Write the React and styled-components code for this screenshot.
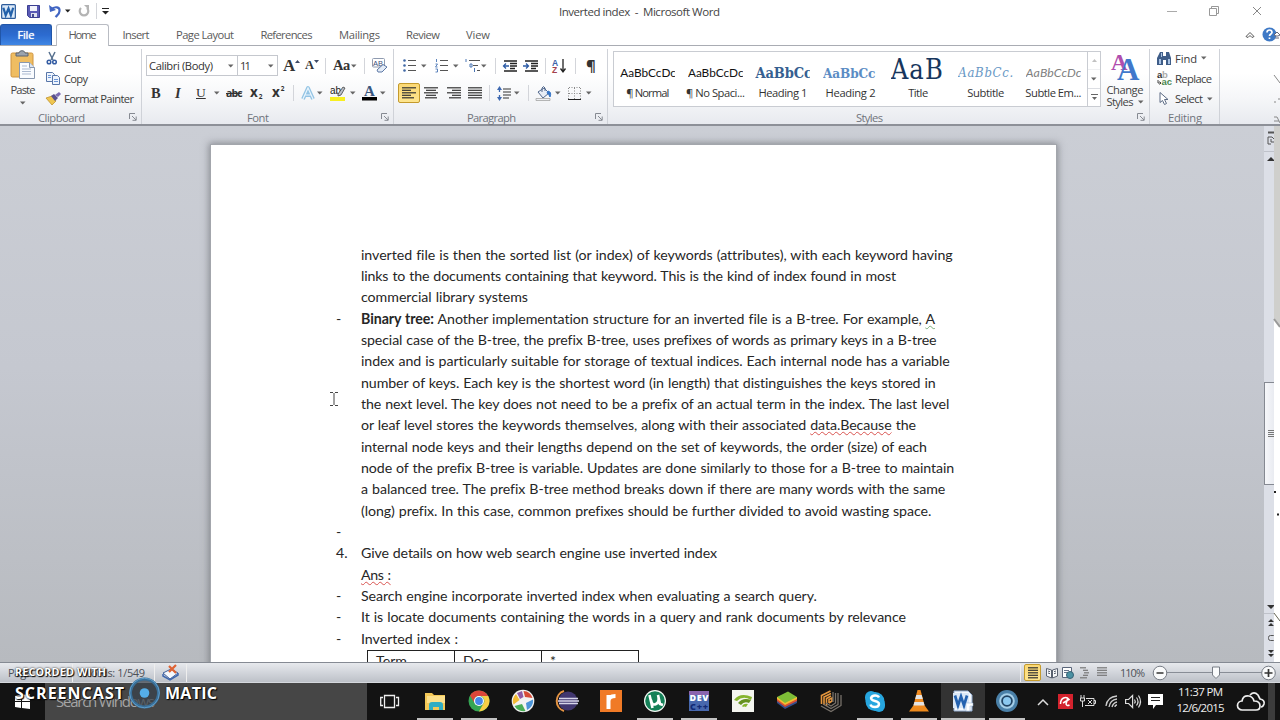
import React, { useLayoutEffect, useRef } from "react";
import styled, { createGlobalStyle } from "styled-components";

const Global = createGlobalStyle`
  * { box-sizing: border-box; }
  body { margin: 0; background: #fff; overflow: hidden; }
  svg { display: block; flex: none; overflow: visible; }
`;
const UI = '"Open Sans", "Noto Sans", sans-serif';

const Screen = styled.div`
  position: relative; width: 1280px; height: 720px; overflow: hidden;
  display: flex; flex-direction: column; background: #fff;
  font: 11.2px ${UI}; color: #3c3c3c;
`;

const FitBox = styled.span`
  display: inline-block; white-space: pre; width: ${p => p.$w}px; flex: none;
`;
/* Spreads a label evenly over the given width. */
function Fit({ w, children }) {
  const inner = useRef(null);
  useLayoutEffect(() => {
    const el = inner.current;
    el.style.letterSpacing = "0px";
    const n = el.textContent.length;
    const natural = el.getBoundingClientRect().width;
    el.style.letterSpacing = `${(w - natural) / Math.max(1, n - 1)}px`;
  });
  return <FitBox $w={w}><span ref={inner}>{children}</span></FitBox>;
}

/* ---------- title bar and tabs ---------- */
const TitleBar = styled.div`
  height: 24px; display: flex; align-items: center; flex: none; padding: 0 0 2px 1px;
`;
const Slot = styled.span`
  width: ${p => p.$w}px; height: ${p => p.$h || 20}px; flex: none;
  display: flex; align-items: center; white-space: nowrap;
`;
const Title = styled.div`
  width: 608px; display: flex; font-size: 11.5px; color: #444; padding-top: 1px;
`;
const Tabs = styled.div`
  height: 22px; flex: none; display: flex; align-items: flex-end;
  border-bottom: 1px solid #a9acb3; color: #5a5a5a;
`;
const FileTab = styled.div`
  width: 52px; height: 21px; margin-right: 4px; color: #fff; border-radius: 3px 3px 0 0;
  background: linear-gradient(#2a62bd, #2c6bd0 50%, #3f86e4); border: 1px solid #2156a8; border-bottom: 0;
  display: flex; justify-content: center; align-items: center; text-shadow: 0 0 1px #fff; padding-bottom: 2px;
`;
const Tab = styled.div`
  width: ${p => p.$w}px; height: 22px; margin-bottom: -1px;
  display: flex; justify-content: center; align-items: center; padding-bottom: 3px;
  border: 1px solid ${p => (p.$active ? "#b9bcc3" : "transparent")}; border-bottom: 0;
  border-radius: 3px 3px 0 0; background: ${p => (p.$active ? "#fff" : "none")};
`;
const TabTools = styled.div`
  margin-left: auto; height: 21px; display: flex; align-items: center;
`;

/* ---------- ribbon ---------- */
const Ribbon = styled.div`
  height: 80px; flex: none; display: flex; padding-top: 3px; border-bottom: 2px solid #8d9098;
  background: linear-gradient(#fff 0, #fff 35%, #f6f7f9 65%, #e8eaef);
`;
const Group = styled.section`
  width: ${p => p.$w}px; flex: none; height: 75px; display: flex; flex-direction: column;
  border-right: 1px solid #cfd2d8;
`;
const GroupBody = styled.div`
  height: 61px; display: flex; flex-direction: ${p => (p.$col ? "column" : "row")};
  padding: ${p => p.$pad || "0"};
`;
const GroupFoot = styled.div`
  height: 14px; display: flex; align-items: center; color: #70747c;
  padding: 0 4px 0 ${p => p.$left}px; justify-content: space-between;
`;
const Row = styled.div`
  display: flex; align-items: center; flex: none; height: ${p => p.$h || 20}px; margin-bottom: ${p => p.$mb || 0}px;
`;
const Big = styled.div`
  width: ${p => p.$w}px; display: flex; flex-direction: column; align-items: center; flex: none;
  color: #444; line-height: 12px; padding-top: 1px;
`;
const BigText = styled.div`display: flex; align-items: center; gap: 4px; height: ${p => p.$h || 12}px;`;
const Column = styled.div`display: flex; flex-direction: column; margin-top: -1px;`;
const Combo = styled.div`
  width: ${p => p.$w}px; height: 21px; border: 1px solid #c5c8ce; margin-left: ${p => p.$ml || 0}px;
  display: flex; align-items: center; justify-content: space-between; padding: 0 3px 0 2px; color: #333;
  background: #fff; flex: none;
`;
const Rule = styled.i`width: 1px; height: 16px; background: #d3d5da; flex: none;`;
const Glyph = styled.span`
  font-family: ${p => p.$f || '"Liberation Serif", serif'}; font-size: ${p => p.$s || 14}px;
  font-weight: ${p => p.$b || 700}; font-style: ${p => p.$i || "normal"}; color: ${p => p.$c || "#333"};
  text-decoration: ${p => p.$d || "none"}; line-height: 1; letter-spacing: ${p => p.$ls || 0}px;
`;
const Script = styled(Glyph)`margin-top: ${p => p.$y}px; margin-left: 1px;`;
const Pressed = styled.span`
  width: 22px; height: 20px; flex: none; border: 1px solid #c49a2c; border-radius: 2px;
  background: linear-gradient(#fbd874, #fde58f); display: flex; align-items: center; justify-content: center;
`;

const Gallery = styled.div`
  display: flex; width: 488px; height: 56px; margin-top: 2px; border: 1px solid #c9ccd2; background: #fff; flex: none;
`;
const Style = styled.div`
  width: 67.6px; height: 54px; flex: none; display: flex; flex-direction: column; align-items: center; padding-top: 5px;
`;
const Sample = styled.div`
  width: 55px; height: 29px; overflow: hidden; white-space: nowrap; line-height: ${p => p.$lh || 32}px;
  font-family: ${p => p.$f}; font-size: ${p => p.$s}px; font-weight: ${p => p.$b || 400};
  font-style: ${p => p.$i || "normal"}; color: ${p => p.$c}; letter-spacing: ${p => p.$ls || 0}px;
`;
const StyleName = styled.div`height: 16px; line-height: 14px; color: #333;`;
const GalleryScroll = styled.div`
  width: 13px; margin-left: auto; display: flex; flex-direction: column; border-left: 1px solid #c9ccd2;
`;
const ScrollCell = styled.div`
  flex: 1; display: flex; align-items: center; justify-content: center;
  border-bottom: ${p => (p.$last ? 0 : 1)}px solid #dcdee3; opacity: ${p => (p.$dim ? 0.45 : 1)};
`;

/* ---------- document ---------- */
const Workspace = styled.div`
  height: 536px; flex: none; display: flex; overflow: hidden;
  background: linear-gradient(#cbced5, #c5c8d0 45%, #b7babf);
`;
const Page = styled.main`
  width: 845px; height: 560px; margin: 19px 208px 0 211px; flex: none; background: #fff; padding: 98.6px 0 0 125px;
  box-shadow: 0 0 0 1px #a3a6ac, 0 0 7px 2px rgba(70,72,78,.5);
  font-family: Lato, "Open Sans", sans-serif; font-size: 14.2px; color: #262626; word-spacing: .5px;
`;
const Line = styled.div`height: 21.33px; line-height: 22px; display: flex;`;
const Mark = styled.span`width: 25px; flex: none;`;
const Wavy = styled.span`
  text-decoration: underline wavy ${p => p.$c || "#d9534f"} 1px; text-underline-offset: 1px;
`;
const Table = styled.div`
  display: grid; grid-template-columns: 87px 87px 97px; width: 272px; height: 40px; margin: 1px 0 0 31px;
  border: 1px solid #222; border-right: 0; line-height: 20px;
`;
const Cell = styled.div`border-right: 1px solid #222; padding-left: 8px;`;
const ScrollBar = styled.div`
  width: 10px; flex: none; background: #dcdfe7; display: flex; flex-direction: column; overflow: hidden;
`;
const ScrollPart = styled.div`
  height: ${p => p.$h}px; flex: none; display: flex; flex-direction: column; align-items: center;
  justify-content: ${p => p.$j || "center"}; padding-left: 3px;
  border-bottom: ${p => (p.$line ? 1 : 0)}px solid #bfc2ca;
`;
const Thumb = styled.div`
  height: 103px; border: 1px solid #858992; border-right: 0; background: linear-gradient(90deg,#f6f7fa,#e9ebf1);
  display: flex; align-items: center; padding-left: 3px; flex: none;
`;
const Edge = styled.div`flex: 1; background: #fff;`;

/* ---------- status bar ---------- */
const Status = styled.div`
  height: 21px; flex: none; display: flex; align-items: center; padding-left: 8px; color: #4e5158; font-size: 11px;
  background: linear-gradient(#e7e9ed, #d4d7dd 45%, #bdc1c8); border-top: 1px solid #858a93; border-bottom: 1px solid #d5d8dd;
`;
const Divider = styled.i`width: 1px; height: 18px; background: #aaaeb6; border-right: 1px solid #eee; flex: none;`;
const ViewOn = styled(Pressed)`width: 17px; height: 17px;`;

/* ---------- taskbar ---------- */
const Taskbar = styled.div`
  height: 37px; flex: none; display: flex; background: #131313; color: #eee;
`;
const Start = styled.div`width: 45px; padding: 11px 0 0 15px; flex: none;`;
const Search = styled.div`
  width: 322px; background: #464646; color: #a5a5a5; font-size: 15px; line-height: 36px; padding-left: 11px; flex: none;
`;
const TaskItem = styled.div`
  width: ${p => (p.$first ? 46 : 44)}px; height: 37px; display: flex; flex-direction: column; align-items: center; padding-top: 6px;
  background: ${p => (p.$active ? "#333" : "none")}; flex: none;
`;
const Running = styled.i`
  width: ${p => (p.$wide ? 44 : 36)}px; height: 2px; margin-top: auto; flex: none;
  background: ${p => (p.$on ? "#c2c2c2" : "transparent")};
`;
const Tray = styled.div`display: flex; align-items: center; padding-left: 8px; flex: 1;`;
const Clock = styled.div`
  width: 73px; display: flex; flex-direction: column; align-items: center; font-size: 11.5px; line-height: 16px; padding-bottom: 3px;
`;
const Peek = styled.i`width: 7px; height: 37px; background: #3c3c3c; margin-left: 5px; flex: none;`;

/* ---------- floating layers ---------- */
const Watermark = styled.div`
  position: absolute; left: 15px; top: 663px; color: #fff; font-weight: 700;
  text-shadow: 1px 1px 1px #000, 0 0 2px #000;
`;
const MarkTop = styled.div`font-size: 10.8px; line-height: 17px; height: 13px;`;
const MarkRow = styled.div`display: flex; align-items: center; height: 34px; font-size: 16px; gap: 5px;`;
const Caret = styled.div`position: absolute; left: 330px; top: 392px;`;
const Stray = styled.div`position: absolute; left: 1274px; top: 75px;`;

/* ---------- drawings ---------- */
const Arr = ({ c = "#666" }) => <svg width="6" height="4"><path d="M0 .5h5.500L2.700 3.500z" fill={c} /></svg>;
const SizeMark = ({ up }) => <svg width="5" height="14"><path d={up ? "M0 4h5L2.500 1z" : "M0 1h5L2.500 4z"} fill="#3d4a66" /></svg>;
const Launcher = () => <svg width="8" height="8" fill="none" stroke="#868a92"><path d="M.5 6V.5H6M3 3l4 4M7.2 3.5v3.8H3.500" /></svg>;
const Lines = ({ rows, w = 14, c = "#333" }) => (
  <svg width={w} height="12" stroke={c}>{rows.map(([a, b], i) => <path key={i} d={`M${a} ${i * 2.5 + 0.8}H${b}`} strokeWidth="1.2" />)}</svg>
);
const WordLogo = () => (
  <svg width="15" height="15" viewBox="0 0 16 16"><rect x=".7" y=".7" width="14.6" height="14.6" rx="1" fill="#dbe9f8" stroke="#2c5b9b" strokeWidth="1.3" />
    <path d="M2.500 4l2.500 8 3-7 2.500 7L13 4" fill="none" stroke="#2361aa" strokeWidth="2.400" /></svg>
);
const Save = () => <svg width="13" height="13"><path d="M.5.5h12v12h-10l-2-2z" fill="#5a5ab5" stroke="#3b3f91" /><path d="M3 1h7v5H3z" fill="#f3f4fb" /><path d="M4 8h6v4H4z" fill="#dfe2ef" /><path d="M5 9h2v3H5z" fill="#444a90" /></svg>;
const Undo = () => <svg width="13" height="13" fill="none" stroke="#4165c2" strokeWidth="2.200"><path d="M2 4.500C6 .8 11 2 10.500 6c0 3-2 4-4 6" /><path d="M0 0l1 7 6-2z" fill="#4165c2" stroke="none" /></svg>;
const Redo = () => <svg width="12" height="13" fill="none" stroke="#b4b4b4" strokeWidth="2.200"><path d="M3 3a4.300 4.300 0 1 0 6 0" /><path d="M6 0h5v5z" fill="#b4b4b4" stroke="none" /></svg>;
const Paste = () => (
  <svg width="26" height="29"><rect x="1" y="3" width="22" height="24" rx="1.500" fill="#efbd62" stroke="#cf9440" /><path d="M6 5V3h3c0-3 6-3 6 0h3v3H6z" fill="#9ba3ad" stroke="#5d6570" />
    <path d="M9.500 12.500h10l5 5v11h-15z" fill="#fafcff" stroke="#8898b0" /><path d="M19.500 12.500v5h5" fill="#dbe5f2" stroke="#8898b0" /><path d="M12 19h9M12 21.500h9M12 24h9M12 16h5" stroke="#abb9d0" /></svg>
);
const Cut = () => <svg width="11" height="13" fill="none" stroke="#345ca3" strokeWidth="1.500"><path d="M3 0l4 8M9 0L5 8" stroke="#57708e" /><circle cx="3" cy="10" r="1.800" /><circle cx="8.500" cy="10" r="1.800" /></svg>;
const Copy = () => <svg width="15" height="13" fill="#eef4fd" stroke="#5876a8"><path d="M.5.5h6l2 2v7h-8z" /><path d="M6.500 3.500h5l2 2v7h-7z" /><path d="M2 3.500h3M2 5.500h3M8 7.500h4M8 9.500h4" stroke="#6b95d6" /></svg>;
const Brush = () => <svg width="15" height="13"><path d="M0 6l6-2 4 5-4 4z" fill="#efc650" stroke="#b98b24" strokeWidth=".7" /><path d="M5 4l3-2 4 4-3 3z" fill="#59518d" /><path d="M9 3l4-3 2 2-3 3z" fill="#7a6bb1" /></svg>;
const Eraser = () => <svg width="16" height="15"><rect x=".5" y=".5" width="12" height="8.500" rx="1" fill="#fff" stroke="#8f9bb0" /><text x="1" y="7.500" fontSize="7.500" fontFamily="Liberation Sans" fill="#3a4f7d">AB</text><path d="M5 12l6-5.500 4 2.500-5 5H6z" fill="#e4ecf7" stroke="#5d78a5" /></svg>;
const ListIcon = ({ n }) => (
  <svg width="14" height="13"><g stroke="#555"><path d="M5 1.500h8M5 6.500h8M5 11.500h8" /></g>
    {n ? <path d="M1.500 0v3M.5 5h2l-2 3h2M.5 10h2v3h-2" fill="none" stroke="#4b76b5" strokeWidth=".9" /> : <g fill="#4169a6"><circle cx="1.500" cy="1.500" r="1.300" /><circle cx="1.500" cy="6.500" r="1.300" /><circle cx="1.500" cy="11.500" r="1.300" /></g>}</svg>
);
const Multi = () => <svg width="16" height="14"><path d="M4 1.500h11M8 6.500h5M12 11.500h3" stroke="#555" /><path d="M1 0v3M5 5h2v3H5zM9.500 9v4" fill="none" stroke="#4b76b5" /></svg>;
const Indent = ({ flip }) => <svg width="16" height="12"><path d="M2 1h13M8 3.500h7M8 6h7M8 8.500h5M2 11h13" stroke="#222" strokeWidth="1.300" /><path d={flip ? "M0 6h5M3 3.500L5.500 6 3 8.500" : "M7 6H1.500M4 3.500L1.500 6 4 8.500"} fill="none" stroke="#2d5ca6" strokeWidth="1.300" /></svg>;
const Sort = () => <svg width="14" height="16"><text x="0" y="7.500" fontSize="8.500" fontWeight="700" fontFamily="Liberation Sans" fill="#3b63a8">A</text><text x="0" y="15" fontSize="8.500" fontWeight="700" fontFamily="Liberation Sans" fill="#a3404c">Z</text><path d="M11 1v12M8.500 10.500L11 14l2.500-3.500" stroke="#222" strokeWidth="1.300" fill="none" /></svg>;
const Spacing = () => <svg width="15" height="15"><path d="M6 3h8M6 6h8M6 9h8M6 12h6" stroke="#333" strokeWidth="1.200" /><path d="M2.500 2v4M2.500 9v4" stroke="#3d68b0" strokeWidth="1.300" /><path d="M0 4l2.500-4L5 4zM0 11l2.500 4L5 11z" fill="#3d68b0" /></svg>;
const Bucket = () => <svg width="16" height="15"><path d="M2 6l6-4 5 5-6 5z" fill="#e7edf6" stroke="#51678c" /><path d="M6 6V2q1.500-3 3 0v3" fill="none" stroke="#51678c" /><path d="M12 5q4 1 2 6-1-3-3-4z" fill="#3776c8" stroke="#3776c8" /><path d="M0 12.500h14v2H0z" fill="#eef0f4" stroke="#999" strokeWidth=".7" /></svg>;
const Borders = () => <svg width="13" height="13"><path d="M1 .5h11M.5 1v11M12.500 1v11M6.500 1v11M1 6.500h11" stroke="#888" strokeDasharray="1 1.500" /><path d="M0 12.500h13" stroke="#222" /></svg>;
const Highlight = () => <svg width="16" height="17"><text x="0" y="8.500" fontSize="10" fontFamily="Liberation Sans" fill="#222">ab</text><path d="M8 9l5-7 2 1-4 7-3 1z" fill="#b9bfc9" stroke="#444" strokeWidth=".8" /><path d="M0 12h15v4H0z" fill="#f8ef20" /></svg>;
const FontColor = () => <svg width="15" height="17"><text x="2" y="11" fontSize="15" fontWeight="700" fontFamily="Liberation Serif" fill="#39577f">A</text><path d="M0 12h15v3.500H0z" fill="#000" /></svg>;
const Effects = () => <svg width="15" height="15"><path d="M2 13L7 2l5 11M4 9h6" stroke="#72b1dc" strokeWidth="3.800" strokeLinejoin="round" fill="none" opacity=".75" /><path d="M2 13L7 2l5 11M4 9h6" stroke="#e9f5fd" strokeWidth="1.200" fill="none" /></svg>;
const Change = () => <svg width="28" height="28"><g fontFamily="Liberation Serif" fontWeight="700"><text x="0" y="17" fontSize="23" fill="#b04eae">A</text><text x="6" y="27" fontSize="31" fill="#4078cb">A</text></g></svg>;
const Find = () => <svg width="15" height="13" fill="#3f5d88"><path d="M3 0h3v4h3V0h3l2 6v7H9V8H6v5H0V6z" /><path d="M2 7h2v5H2zM11 7h2v5h-2zM4 1h1v4H4z" fill="#a9c3e4" /></svg>;
const Replace = () => <svg width="15" height="14"><g fontFamily="Liberation Sans" fontSize="9.500" fontWeight="700"><text x="0" y="6" fill="#333">a</text><text x="5" y="6" fill="#aaa">b</text><text x="4.500" y="13" fill="#4c8a51">ac</text></g><path d="M1 8v3h3M2.500 9.500L4 11l-1.500 1.500" fill="none" stroke="#444" /></svg>;
const Pointer = () => <svg width="12" height="13"><path d="M3 .5v10l2.500-2 2 4 2-1-2-4H11z" fill="#fff" stroke="#5c6b84" /></svg>;
const Help = () => <svg width="18" height="15"><circle cx="7.500" cy="7.500" r="7" fill="#3e79c6" /><path d="M5 5.500q0-2.500 2.500-2.500T10 5.500C10 7 7.500 7 7.500 9M7.500 10.500v1.500" fill="none" stroke="#fff" strokeWidth="1.700" /><path d="M12 8l3-3 3 3-2 1h-2zM13 11h4" fill="#fff" stroke="#667" /></svg>;
const Proof = () => <svg width="17" height="15"><path d="M1 8l8-4 7 4-8 6z" fill="#f5f8fd" stroke="#40609a" /><path d="M1 9v2l7 4 8-5V8" fill="none" stroke="#3f67ae" strokeWidth="1.500" /><path d="M7 1l7 7M14 0L7 7" stroke="#df6334" strokeWidth="2.200" /></svg>;
const Book = () => <svg width="12" height="12" fill="#f8f9fb" stroke="#59616f"><path d="M.5 1.500L5.500 3v8L.5 9zM11.500 1.500L6.500 3v8l5-2zM2 4l2 .7M2 6l2 .7M10 4l-2 .7M10 6l-2 .7" /></svg>;
const WebView = () => <svg width="12" height="12"><path d="M.5.5h9v10h-9z" fill="#fff" stroke="#59657a" /><path d="M2 3.500h5M2 5.500h5" stroke="#69758b" /><circle cx="8" cy="8" r="3.500" fill="#4b91a3" stroke="#376275" /></svg>;

const icons = {
  task: <svg width="20" height="24" fill="none" stroke="#eee" strokeWidth="1.300"><path d="M4.500 6.500h10v12h-10zM3 8.500H.7v8H3M16 8.500h2.500v8H16" /></svg>,
  files: <svg width="22" height="24"><path d="M1 4h7l2 2h11v15H1z" fill="#f3c857" /><path d="M3 7h18v7H3z" fill="#fce08b" /><path d="M5 21v-5q0-3 3-3h8q3 0 3 3v5h-4v-3H9v3z" fill="#30adc2" /></svg>,
  chrome: <svg width="24" height="24"><circle cx="12" cy="12" r="10.500" fill="#35a553" /><path d="M3 6.500A10.500 10.500 0 0 1 21.200 7H12a5 5 0 0 0-4.500 7z" fill="#dc463a" /><path d="M21.200 7A10.500 10.500 0 0 1 12 22.500l4.500-8A5 5 0 0 0 14 7z" fill="#f7ce46" /><circle cx="12" cy="12" r="5" fill="#fff" /><circle cx="12" cy="12" r="3.900" fill="#4687e9" /></svg>,
  picasa: <svg width="24" height="24"><circle cx="12" cy="12" r="11.300" fill="#f2f2f2" /><path d="M12.500 2a10 10 0 0 1 9 7l-7.500-1z" fill="#d74c37" /><path d="M22 10.500a10 10 0 0 1-6 10.500l-1-7z" fill="#4b94d8" /><path d="M14.500 22a10 10 0 0 1-11-5l7.500-2z" fill="#48ad55" /><path d="M2.500 15.500A10 10 0 0 1 5 5l3.500 6z" fill="#f2bc34" /><path d="M6 4l5-2 1.500 6L9 10z" fill="#8f5aa5" /></svg>,
  eclipse: <svg width="24" height="24"><path d="M9 2a10.500 10.500 0 0 0 0 20" fill="none" stroke="#e59442" strokeWidth="2" /><circle cx="13" cy="12" r="9.500" fill="#41376f" /><path d="M4 9.500h19M3 12h21M4 14.500h19" stroke="#d6d5e9" strokeWidth="1.500" /></svg>,
  r: <svg width="24" height="24"><path d="M1 1h22v22H1z" fill="#f07a26" /><path d="M9.500 20V6M9.500 12q0-5 7-5" fill="none" stroke="#fff" strokeWidth="4" /></svg>,
  ut: <svg width="24" height="24"><circle cx="12" cy="12" r="11" fill="#f4faf5" /><circle cx="12" cy="12" r="9.800" fill="#148057" /><path d="M6.500 6l3 13M8 11q1 6 5 4t2-9l2 9 3 1" fill="none" stroke="#fff" strokeWidth="2.600" /></svg>,
  dev: <svg width="22" height="24"><path d="M1 2h20v20H1z" fill="#4868ae" /><path d="M1 2h20v4H1z" fill="#8a65ae" /><text x="1.500" y="12" textLength="19" fontFamily="Open Sans" fontWeight="800" fontSize="9" fill="#fff">DEV</text><text x="2" y="21" textLength="18" fontFamily="Open Sans" fontWeight="800" fontSize="9" fill="#122a75">C++</text></svg>,
  green: <svg width="24" height="24"><path d="M1 1h22v22H1z" fill="#f4f5ef" /><path d="M3 11Q9 3 21 8l-1 3Q12 6 6 12z" fill="#86b52e" /><path d="M7 14q5-6 13-3l-2 3q-5-2-8 2z" fill="#65911f" /><path d="M11 17q2-3 6-2l-2 3q-2-1-3 0z" fill="#86b52e" /></svg>,
  stacks: <svg width="22" height="24"><path d="M1 14l8 6 12-6v-3H1z" fill="#334d8a" /><path d="M1 12l8 6 12-6V9H1z" fill="#d94f33" /><path d="M1 10l8 6 12-6V8H1z" fill="#f3bd31" /><path d="M1 8l11-5.500L21 8 9 14z" fill="#7ebd37" /></svg>,
  hex: <svg width="24" height="24" fill="none" strokeWidth="1.300"><path d="M2.500 15V6.500l9-4.500M5 16V8l7-3.500M7.500 17V9.500L12 7M10 14v-3.500l3-1.500v3l-3 2" stroke="#e5963d" strokeWidth="1.600" /><path d="M2 17l10 5.500 10-6V6M4 15l8 4.500 7-4V4M7 14l5 3 4.500-3V4M14 3v10" stroke="#77716a" /></svg>,
  skype: <svg width="24" height="24"><rect x="2" y="2" width="12" height="13" rx="6" fill="#27a6df" /><rect x="10" y="9" width="12" height="14" rx="6" fill="#27a6df" /><circle cx="12" cy="12.500" r="9.500" fill="#27a6df" /><path d="M16 8.500q-1-2-4-2T8 9c0 4 8 2 8 6q0 3-4 3t-4.500-2.500" fill="none" stroke="#fff" strokeWidth="2.400" /></svg>,
  vlc: <svg width="22" height="24"><path d="M5 17h12l4 5.500H1z" fill="#ee8a1c" /><path d="M9.500 1h3l4.500 17q-6 3-12 0z" fill="#f08b20" /><path d="M8.300 6h5.400l1.100 4H7.200zM6.400 13h9.200l1 3.500H5.400z" fill="#e4e4e4" /></svg>,
  word: <svg width="22" height="24"><path d="M2 2h14l4 4v16H2z" fill="#f4f8fd" stroke="#93add0" /><path d="M1 4h16v15H1z" fill="#dbe8f7" /><path d="M3 6.500l3 10 3-9 3 9 3-10" fill="none" stroke="#2462b0" strokeWidth="2.700" /><path d="M14 14h7v3h-3v5h-4z" fill="#fff" stroke="#93add0" strokeWidth=".5" /></svg>,
  rec: <svg width="24" height="24"><circle cx="12" cy="12" r="11" fill="#4a80a8" /><circle cx="12" cy="12" r="7.800" fill="#a6cfe8" /><circle cx="12" cy="12" r="5.800" fill="#214363" /><circle cx="12" cy="12" r="4" fill="#8bc8ef" /></svg>,
};
const apps = [["task"], ["files", 1], ["chrome", 1], ["picasa"], ["eclipse"], ["r"], ["ut", 1], ["dev", 1], ["green"], ["stacks"], ["hex"], ["skype", 1], ["vlc", 1], ["word", 1, 1], ["rec", 1]];

const CAL = 'Lato, sans-serif';
const CAM = '"DejaVu Serif Condensed", "DejaVu Serif", serif';
const styles = [
  ["¶ Normal", 43, { $f: CAL, $s: 11.8, $c: "#111" }, "AaBbCcDc"],
  ["¶ No Spaci...", 59, { $f: CAL, $s: 11.8, $c: "#111" }, "AaBbCcDc"],
  ["Heading 1", 49, { $f: CAM, $s: 14.5, $b: 700, $c: "#365f91", $ls: -0.1 }, "AaBbCc"],
  ["Heading 2", 50, { $f: CAM, $s: 13.5, $b: 700, $c: "#5b8cc4", $ls: -0.15 }, "AaBbCc"],
  ["Title", 20, { $f: CAM, $s: 27, $c: "#17365d", $ls: 1.1, $lh: 25 }, "AaB"],
  ["Subtitle", 37, { $f: CAM, $s: 13, $i: "italic", $c: "#6797c5", $ls: 0.7 }, "AaBbCc."],
  ["Subtle Em...", 56, { $f: CAL, $s: 12.3, $i: "italic", $c: "#808080", $ls: 0.1 }, "AaBbCcDc"],
];

const paragraphs = [
  ["", 591, "inverted file is then the sorted list (or index) of keywords (attributes), with each keyword having"],
  ["", 535, "links to the documents containing that keyword. This is the kind of index found in most"],
  ["", 167, "commercial library systems"],
  ["-", 574, <><b>Binary tree:</b> Another implementation structure for an inverted file is a B-tree. For example, <Wavy $c="#79ad79">A</Wavy></>],
  ["", 575, "special case of the B-tree, the prefix B-tree, uses prefixes of words as primary keys in a B-tree"],
  ["", 589, "index and is particularly suitable for storage of textual indices. Each internal node has a variable"],
  ["", 575, "number of keys. Each key is the shortest word (in length) that distinguishes the keys stored in"],
  ["", 588, "the next level. The key does not need to be a prefix of an actual term in the index. The last level"],
  ["", 555, <>or leaf level stores the keywords themselves, along with their associated <Wavy>data.Because</Wavy> the</>],
  ["", 566, "internal node keys and their lengths depend on the set of keywords, the order (size) of each"],
  ["", 593, "node of the prefix B-tree is variable. Updates are done similarly to those for a B-tree to maintain"],
  ["", 584, "a balanced tree. The prefix B-tree method breaks down if there are many words with the same"],
  ["", 570, "(long) prefix. In this case, common prefixes should be further divided to avoid wasting space."],
  ["-", 1, ""],
  ["4.", 356, "Give details on how web search engine use inverted index"],
  ["", 30, <Wavy key="a">Ans :</Wavy>],
  ["-", 456, "Search engine incorporate inverted index when evaluating a search query."],
  ["-", 545, "It is locate documents containing the words in a query and rank documents by relevance"],
  ["-", 97, "Inverted index :"],
];

export default function App() {
  return (
    <Screen>
      <Global />
      <TitleBar>
        <Slot $w={26}><WordLogo /></Slot>
        <Slot $w={22}><Save /></Slot>
        <Slot $w={16}><Undo /></Slot>
        <Slot $w={13}><Arr c="#222" /></Slot>
        <Slot $w={18}><Redo /></Slot>
        <Slot $w={6}><Rule /></Slot>
        <Slot $w={457}><svg width="7" height="7"><path d="M0 .5h7" stroke="#222" /><path d="M0 3h7L3.500 6.500z" fill="#222" /></svg></Slot>
        <Title><Fit w={161}>Inverted index  -  Microsoft Word</Fit></Title>
        <Slot $w={42}><svg width="10" height="2"><path d="M0 1.500h10" stroke="#aaa" /></svg></Slot>
        <Slot $w={43}><svg width="10" height="10" fill="none" stroke="#999"><path d="M.5 2.500h7v7h-7zM2.500 2V.5h7v7H8" /></svg></Slot>
        <Slot $w={20}><svg width="10" height="10" stroke="#888"><path d="M1 1l8 8M9 1L1 9" /></svg></Slot>
      </TitleBar>
      <Tabs>
        <FileTab><Fit w={17}>File</Fit></FileTab>
        <Tab $w={53} $active><Fit w={28}>Home</Fit></Tab>
        <Tab $w={54}><Fit w={27}>Insert</Fit></Tab>
        <Tab $w={84}><Fit w={58}>Page Layout</Fit></Tab>
        <Tab $w={79}><Fit w={52}>References</Fit></Tab>
        <Tab $w={67}><Fit w={41}>Mailings</Fit></Tab>
        <Tab $w={60}><Fit w={34}>Review</Fit></Tab>
        <Tab $w={50}><Fit w={24}>View</Fit></Tab>
        <TabTools>
          <Slot $w={17}><svg width="10" height="8"><path d="M1 5.500l4-4 4 4-2 1-2-2-2 2z" fill="#fff" stroke="#555" /></svg></Slot>
          <Help />
        </TabTools>
      </Tabs>
      <Ribbon>
        <Group $w={142}>
          <GroupBody>
            <Big $w={46}><Paste /><BigText $h={22}><Fit w={25}>Paste</Fit></BigText><Arr /></Big>
            <Column>
              {[[<Cut />, 18, "Cut", 17], [<Copy />, 18, "Copy", 24], [<Brush />, 18, "Format Painter", 70]].map(([ic, s, t, w]) => (
                <Row key={t} $h={20.4}><Slot $w={s}>{ic}</Slot><Fit w={w}>{t}</Fit></Row>
              ))}
            </Column>
          </GroupBody>
          <GroupFoot $left={38}><Fit w={47}>Clipboard</Fit><Launcher /></GroupFoot>
        </Group>
        <Group $w={252}>
          <GroupBody $col $pad="6px 0 0 4px">
            <Row $mb={7} $h={21}>
              <Combo $w={92}><Fit w={64}>Calibri (Body)</Fit><Arr /></Combo>
              <Combo $w={41} $ml={-1}><Fit w={11}>11</Fit><Arr /></Combo>
              <Slot $w={5} />
              <Slot $w={22}><Glyph $s={17}>A</Glyph><SizeMark up /></Slot>
              <Slot $w={20}><Glyph $s={12.5}>A</Glyph><SizeMark /></Slot>
              <Slot $w={8}><Rule /></Slot>
              <Slot $w={18}><Glyph $s={14.5} $ls={-0.5}>Aa</Glyph></Slot><Slot $w={13}><Arr /></Slot>
              <Slot $w={8}><Rule /></Slot>
              <Slot $w={16}><Eraser /></Slot>
            </Row>
            <Row>
              <Slot $w={5} />
              <Slot $w={24}><Glyph $s={14.5}>B</Glyph></Slot>
              <Slot $w={21}><Glyph $s={14.5} $i="italic">I</Glyph></Slot>
              <Slot $w={18}><Glyph $s={13.5} $b={400} $d="underline">U</Glyph></Slot>
              <Slot $w={12}><Arr /></Slot>
              <Slot $w={24}><Glyph $f={UI} $s={10.5} $d="line-through" $ls={-0.9}>abc</Glyph></Slot>
              <Slot $w={22}><Glyph $f={UI} $s={13.5}>x</Glyph><Script $f={UI} $s={6.5} $y={8}>2</Script></Slot>
              <Slot $w={21}><Glyph $f={UI} $s={13.5}>x</Glyph><Script $f={UI} $s={6.5} $y={-7}>2</Script></Slot>
              <Slot $w={8}><Rule /></Slot>
              <Slot $w={16}><Effects /></Slot>
              <Slot $w={13}><Arr /></Slot>
              <Slot $w={20}><Highlight /></Slot>
              <Slot $w={12}><Arr /></Slot>
              <Slot $w={18}><FontColor /></Slot>
              <Slot $w={8}><Arr /></Slot>
            </Row>
          </GroupBody>
          <GroupFoot $left={105}><Fit w={22}>Font</Fit><Launcher /></GroupFoot>
        </Group>
        <Group $w={214}>
          <GroupBody $col $pad="6px 0 0 4px">
            <Row $mb={7} $h={21}>
              <Slot $w={5} />
              <Slot $w={18}><ListIcon /></Slot><Slot $w={14}><Arr /></Slot>
              <Slot $w={18}><ListIcon n /></Slot><Slot $w={12}><Arr /></Slot>
              <Slot $w={16}><Multi /></Slot><Slot $w={14}><Arr /></Slot>
              <Slot $w={7}><Rule /></Slot>
              <Slot $w={21}><Indent /></Slot><Slot $w={22}><Indent flip /></Slot>
              <Slot $w={7}><Rule /></Slot><Slot $w={23}><Sort /></Slot>
              <Slot $w={11}><Rule /></Slot><Slot $w={12}><Glyph $f={UI} $s={15}>¶</Glyph></Slot>
            </Row>
            <Row>
              <Pressed><Lines rows={[[0, 14], [0, 9], [0, 14], [0, 9], [0, 12]]} /></Pressed>
              <Slot $w={4} />
              <Slot $w={23}><Lines rows={[[0, 14], [2, 12], [0, 14], [2, 12], [1, 13]]} /></Slot>
              <Slot $w={21}><Lines rows={[[0, 14], [5, 14], [0, 14], [5, 14], [2, 14]]} /></Slot>
              <Slot $w={21}><Lines rows={[[0, 14], [0, 14], [0, 14], [0, 14], [0, 14]]} /></Slot>
              <Slot $w={8}><Rule /></Slot>
              <Slot $w={17}><Spacing /></Slot><Slot $w={14}><Arr /></Slot>
              <Slot $w={8}><Rule /></Slot>
              <Slot $w={19}><Bucket /></Slot><Slot $w={13}><Arr /></Slot>
              <Slot $w={18}><Borders /></Slot><Slot $w={6}><Arr /></Slot>
            </Row>
          </GroupBody>
          <GroupFoot $left={73}><Fit w={49}>Paragraph</Fit><Launcher /></GroupFoot>
        </Group>
        <Group $w={542}>
          <GroupBody $pad="0 0 0 5px">
            <Gallery>
              {styles.map(([name, w, look, text]) => (
                <Style key={name}><Sample {...look}>{text}</Sample><StyleName><Fit w={w}>{name}</Fit></StyleName></Style>
              ))}
              <GalleryScroll>
                <ScrollCell $dim><svg width="5" height="3"><path d="M0 3h5L2.500 0z" fill="#777" /></svg></ScrollCell>
                <ScrollCell><Arr /></ScrollCell>
                <ScrollCell $last><svg width="7" height="7"><path d="M0 .5h7" stroke="#666" /><path d="M1 3h5L3.500 6z" fill="#666" /></svg></ScrollCell>
              </GalleryScroll>
            </Gallery>
            <Big $w={48}>
              <Slot $w={28} $h={34}><Change /></Slot>
              <BigText><Fit w={37}>Change</Fit></BigText>
              <BigText><Fit w={27}>Styles</Fit><Arr /></BigText>
            </Big>
          </GroupBody>
          <GroupFoot $left={248}><Fit w={27}>Styles</Fit><Launcher /></GroupFoot>
        </Group>
        <Group $w={70}>
          <GroupBody $pad="0 0 0 7px">
            <Column>
              <Row $h={20.4}><Slot $w={18}><Find /></Slot><Fit w={22}>Find</Fit><Slot $w={4} /><Arr /></Row>
              <Row $h={20.4}><Slot $w={18}><Replace /></Slot><Fit w={37}>Replace</Fit></Row>
              <Row $h={20.4}><Slot $w={18}><Pointer /></Slot><Fit w={28}>Select</Fit><Slot $w={4} /><Arr /></Row>
            </Column>
          </GroupBody>
          <GroupFoot $left={18}><Fit w={34}>Editing</Fit></GroupFoot>
        </Group>
      </Ribbon>
      <Workspace>
        <Page>
          {paragraphs.map(([m, w, text], i) => <Line key={i}><Mark>{m}</Mark><Fit w={w}>{text}</Fit></Line>)}
          <Table><Cell>Term</Cell><Cell>Doc</Cell><Cell>*</Cell></Table>
        </Page>
        <ScrollBar>
          <ScrollPart $h={26} $line><svg width="7" height="17" fill="none" stroke="#555"><path d="M1 2.500h7" strokeWidth="2" /><path d="M1 7h4l3 3v6M1 7v7h3M4 9v3h4" /></svg></ScrollPart>
          <ScrollPart $h={230} $j="flex-start"><svg width="7" height="12"><path d="M0 9l4-4 4 4z" fill="#333" /></svg></ScrollPart>
          <Thumb><svg width="7" height="8"><path d="M0 .5h7M0 2.500h7M0 4.500h7M0 6.500h7" stroke="#777" /></svg></Thumb>
          <ScrollPart $h={129} $j="flex-end" $line><svg width="7" height="12"><path d="M0 4h8L4 8z" fill="#333" /></svg></ScrollPart>
          <ScrollPart $h={48} $j="space-around">
            <svg width="6" height="7"><path d="M0 3l3-3 3 3zM0 7l3-3 3 3z" fill="#333" /></svg>
            <svg width="6" height="6"><rect x=".5" y=".5" width="7" height="5" rx="2" fill="none" stroke="#555" /></svg>
            <svg width="6" height="7"><path d="M0 0l3 3 3-3zM0 4l3 3 3-3z" fill="#333" /></svg>
          </ScrollPart>
        </ScrollBar>
        <Edge><svg width="6" height="536"><path d="M0 0h6v201l-6-8z" fill="#cfcfcc" /><path d="M0 193l6 8" stroke="#999" strokeWidth="2" /><path d="M0 366h2M3 388.500h2" stroke="#222" strokeWidth="2" /><path d="M0 487l6 8" stroke="#665" /></svg></Edge>
      </Workspace>
      <Status>
        <Slot $w={64}><Fit w={24}>Page</Fit></Slot>
        <Slot $w={9}><Divider /></Slot>
        <Slot $w={73}><Fit w={64}>Words: 1/549</Fit></Slot>
        <Slot $w={8}><Divider /></Slot>
        <Slot $w={24}><Proof /></Slot>
        <Slot $w={834}><Divider /></Slot>
        <Slot $w={4}><Divider /></Slot>
        <Slot $w={22}><ViewOn><Lines w={10} c="#333" rows={[[0, 10], [0, 10], [0, 10], [0, 10], [0, 10]]} /></ViewOn></Slot>
        <Slot $w={16}><Book /></Slot>
        <Slot $w={18}><WebView /></Slot>
        <Slot $w={17}><Lines w={9} c="#777" rows={[[0, 6], [3, 8], [4, 9], [3, 8], [0, 7]]} /></Slot>
        <Slot $w={23}><Lines w={11} c="#777" rows={[[0, 10], [0, 10], [0, 10], [0, 10]]} /></Slot>
        <Slot $w={33}><Fit w={25}>110%</Fit></Slot>
        <svg width="126" height="16"><path d="M14 7.500h96" stroke="#888d96" /><g fill="#f9fafb" stroke="#777c85"><circle cx="7" cy="8" r="6.800" /><circle cx="115.500" cy="8" r="6.800" /><path d="M59.500 2h7v8L63 13.500 59.500 10z" /></g><path d="M3.500 8h7M111.500 8h8M115.500 4v8" stroke="#333" strokeWidth="1.700" /></svg>
      </Status>
      <Taskbar>
        <Start><svg width="15" height="15" fill="#fff"><path d="M0 2l6-1v6H0zM7 1l8-1v7H7zM0 8h6v6l-6-1zM7 8h8v7l-8-1z" /></svg></Start>
        <Search><Fit w={99}>Search Windows</Fit></Search>
        {apps.map(([n, on, active], i) => <TaskItem key={n} $first={i === 0} $active={active}>{icons[n]}<Running $on={on} $wide={active} /></TaskItem>)}
        <Tray>
          <Slot $w={21}><svg width="12" height="8" fill="none" stroke="#ddd" strokeWidth="1.500"><path d="M1 7l5-5 5 5" /></svg></Slot>
          <Slot $w={22}><svg width="15" height="15"><path d="M0 0h15v15H0z" fill="#d3222d" /><path d="M2.500 10C2.500 4 8 1.500 11 5.500L5 9M9.500 5L8 10q1 2.500 3.500 1" fill="none" stroke="#fff" strokeWidth="1.500" /></svg></Slot>
          <Slot $w={25}><svg width="16" height="13" fill="none" stroke="#ddd"><path d="M6 3.500h8v7H5M14 5.500h1.500v3H14M8 5l4 4M12 5L8 9M1 0v3M4 0v3M.5 3h4v3h-4zM2.500 6v6" /></svg></Slot>
          <Slot $w={20}><svg width="14" height="13" fill="none" stroke="#ccc" strokeWidth="1.300"><path d="M1 11Q2 2 12 1M4 12q1-7 8-8M7 12q1-4 5-5M10 12q0-2 2-2" /></svg></Slot>
          <Slot $w={23}><svg width="16" height="14" fill="none" stroke="#ddd" strokeWidth="1.200"><path d="M.6 4.500h3l4-4v12l-4-4h-3zM9.500 4.500q1.500 2 0 4M11.500 2.500q3 4 0 8M13.500.5q4 6 0 12" /></svg></Slot>
          <Slot $w={16}><svg width="15" height="15"><path d="M0 0h15v11H8l-3 4v-4H0z" fill="#fff" /><path d="M3 3.500h9M3 6.500h9" stroke="#222" strokeWidth="1.200" /></svg></Slot>
          <Clock><Fit w={45}>11:37 PM</Fit><Fit w={48}>12/6/2015</Fit></Clock>
          <Slot $w={26}><svg width="28" height="20" fill="none" stroke="#eee" strokeWidth="1.700"><path d="M5 18a4.500 4.500 0 0 1 0-9q1-6 7-5 4 1 5 5 6 0 6 5 0 4-4 4zM13 3q4-4 8 0l2 4q5 1 4 5-1 3-3 3" /></svg></Slot>
          <Peek />
        </Tray>
      </Taskbar>
      <Caret><svg width="8" height="15" fill="none" stroke="#444"><path d="M0 .5h3M5 .5h3M4 1v12M0 13.500h3M5 13.500h3" /></svg></Caret>
      <Stray><svg width="6" height="52" fill="none" stroke="#888"><path d="M0 0l6 8M0 27h2M4 24h2M0 42h3l3 6M0 46h5" /></svg></Stray>
      <Watermark>
        <MarkTop><Fit w={91}>RECORDED WITH</Fit></MarkTop>
        <MarkRow>
          <Fit w={109}>SCREENCAST</Fit>
          <svg width="31" height="32"><circle cx="15.500" cy="16" r="14" fill="rgba(55,65,75,.7)" stroke="#396f98" strokeWidth="3" /><circle cx="15.500" cy="16" r="14.800" fill="none" stroke="#6aa8d6" strokeWidth=".8" /><circle cx="15.500" cy="16" r="4.800" fill="#55aee8" /></svg>
          <Fit w={52}>MATIC</Fit>
        </MarkRow>
      </Watermark>
    </Screen>
  );
}
